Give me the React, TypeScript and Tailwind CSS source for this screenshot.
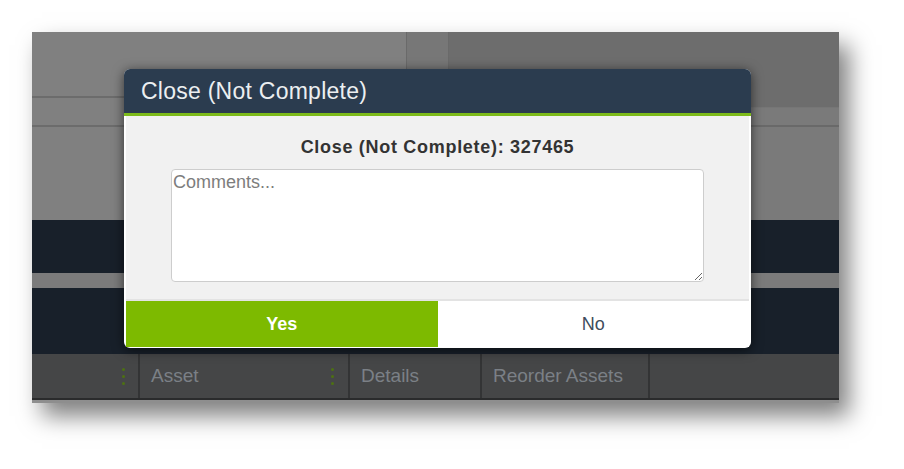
import React from 'react';

function ColumnDots() {
  return (
    <div className="flex flex-col gap-[4px]">
      <span className="block w-[3px] h-[3px] rounded-full bg-[#4d7112]" />
      <span className="block w-[3px] h-[3px] rounded-full bg-[#4d7112]" />
      <span className="block w-[3px] h-[3px] rounded-full bg-[#4d7112]" />
    </div>
  );
}

export default function App() {
  return (
    <div className="w-[904px] min-h-[469px] bg-white pt-[32px] pl-[32px] font-['Liberation_Sans',Arial,sans-serif]">
      <div className="relative w-[807px] h-[371px] flex flex-col shadow-[10px_13px_22px_rgba(0,0,0,0.5)]">
        {/* dimmed page behind the dialog */}
        <div className="flex h-[188px]">
          <div className="w-[374px] flex flex-col bg-[#808080]">
            <div className="h-[66px] border-b-2 border-[#6c6c6c]" />
            <div className="h-[29px] border-b-2 border-[#6c6c6c]" />
            <div className="flex-1" />
          </div>
          <div className="w-[43px] bg-[#777777] border-x border-[#6a6a6a]" />
          <div className="flex-1 flex flex-col bg-[#7a7a7a]">
            <div className="h-[76px] bg-[#6d6d6d] border-b border-[#767676]" />
            <div className="h-[19px] border-b-2 border-[#696969]" />
            <div className="flex-1" />
          </div>
        </div>
        <div className="h-[53px] bg-[#18202a]" />
        <div className="h-[15px] bg-[#7b7b7b]" />
        <div className="h-[66px] bg-[#18202a]" />
        <div className="h-[46px] flex bg-[#454647] border-b-2 border-[#2a2b2c] text-[19px] text-[#7b8086]">
          <div className="w-[106px] flex items-center justify-end pr-[13px]">
            <ColumnDots />
          </div>
          <div className="w-[210px] flex items-center justify-between pl-[11px] pr-[14px] border-l-2 border-[#333435]">
            <span>Asset</span>
            <ColumnDots />
          </div>
          <div className="w-[132px] flex items-center pl-[11px] border-l-2 border-[#333435]">Details</div>
          <div className="w-[168px] flex items-center pl-[11px] border-l-2 border-[#333435]">Reorder Assets</div>
          <div className="flex-1 border-l-2 border-[#333435]" />
        </div>
        <div className="h-[3px] bg-[#8e8e8e]" />

        {/* dialog */}
        <div className="absolute left-[92px] top-[37px] w-[627px] h-[279px] flex flex-col rounded-[6px] overflow-hidden bg-white shadow-[0_2px_12px_rgba(0,0,0,0.6)]">
          <div className="h-[47px] flex items-center pl-[17px] bg-[#2b3c4f] border-b-[3px] border-[#7dbb1a] text-[23px] tracking-[0.25px] text-[#eceff1]">
            Close (Not Complete)
          </div>
          <div className="flex flex-col px-[2px] pb-[1px]">
            <div className="h-[183px] flex flex-col items-center pt-[19px] bg-[#f1f1f1]">
              <div className="text-[18px] leading-[24px] font-bold tracking-[0.7px] text-[#333333]">
                Close (Not Complete): 327465
              </div>
              <textarea
                placeholder="Comments..."
                className="mt-[10px] w-[533px] h-[113px] px-[1px] py-[2px] bg-white border border-[#cdcdcd] rounded-[4px] text-[18px] leading-[21px] text-[#333333] placeholder:text-[#7d7d7d] outline-none"
              />
            </div>
            <div className="h-[48px] grid grid-cols-2 border-t-2 border-[#e3e3e3] text-[18px]">
              <button className="flex items-center justify-center bg-[#7dba00] font-bold text-white">Yes</button>
              <button className="flex items-center justify-center bg-white text-[#3e4d5c]">No</button>
            </div>
          </div>
        </div>
      </div>
    </div>
  );
}
